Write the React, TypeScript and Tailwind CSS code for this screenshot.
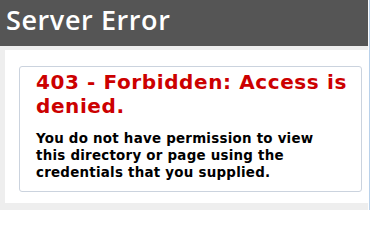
import React from "react";

const App: React.FC = () => {
  return (
    <div className="w-[371px] h-[210px] overflow-hidden bg-[#eeeeee] flex">
      <div className="w-[368px] shrink-0">
        {/* Header */}
        <div className="h-[46px] bg-[#555555] pl-[6px] pt-[4px]">
          <h1 className="text-[27px] leading-[32px] font-semibold tracking-[0.6px] text-white font-['Open_Sans',sans-serif]">
            Server Error
          </h1>
        </div>

        {/* Content */}
        <div className="mt-[4px] ml-[5px] bg-white pt-[16px] pb-[11px] pl-[14px] pr-[6px] font-['DejaVu_Sans',Verdana,sans-serif]">
          <div className="border border-[#cbd3de] rounded-[3px] pl-[16px] pr-[6px] pt-[3px] pb-[10px]">
            <h2 className="text-[20px] leading-[24px] font-bold tracking-[0.6px] text-[#cc0000]">
              403 - Forbidden: Access is
              <br />
              denied.
            </h2>
            <h3 className="mt-[12px] text-[13.4px] leading-[17px] font-bold tracking-[0.25px] text-black">
              You do not have permission to view
              <br />
              this directory or page using the
              <br />
              credentials that you supplied.
            </h3>
          </div>
        </div>
      </div>

      {/* Window edge */}
      <div className="w-px bg-white" />
      <div className="w-px bg-[#b9d1ea]" />
      <div className="w-px bg-white" />
    </div>
  );
};

export default App;
